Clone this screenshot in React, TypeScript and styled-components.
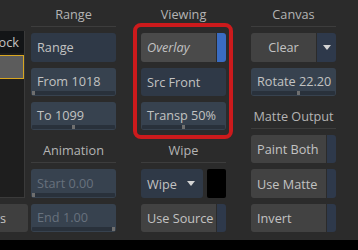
import React from "react";
import styled, { createGlobalStyle } from "styled-components";

const Global = createGlobalStyle`
  html, body { margin: 0; padding: 0; background: #2b2b2b; }
  body { font-family: "Open Sans", "Noto Sans", sans-serif; font-size: 12.7px; }
  * { box-sizing: border-box; }
`;

const Page = styled.div`
  width: 358px;
  height: 250px;
  display: flex;
  flex-direction: column;
  overflow: hidden;
  background: #2b2b2b;
`;

const Main = styled.div`
  height: 240px;
  display: flex;
  align-items: flex-start;
`;

const BottomBar = styled.div`
  height: 10px;
  background: #000;
`;

const LeftPanel = styled.div`
  width: 28px;
  flex-shrink: 0;
  display: flex;
  flex-direction: column;
  gap: 6px;
  padding-top: 31px;
`;

const List = styled.div`
  width: 25px;
  height: 167px;
  background: #1e1e1e;
  border-right: 1px solid #3a3a3a;
  border-bottom: 1px solid #3a3a3a;
  overflow: hidden;
  display: flex;
  flex-direction: column;
  gap: 2px;
`;

const ListHeader = styled.div`
  height: 22px;
  background: #131517;
  color: #c4c4c4;
  display: flex;
  align-items: center;
  justify-content: flex-end;
  padding-right: 5px;
  white-space: nowrap;
`;

const ListRow = styled.div<{ $selected?: boolean }>`
  height: 24px;
  margin-left: -4px;
  background: ${(p) => (p.$selected ? "#5c5c5c" : "transparent")};
  border: 1px solid ${(p) => (p.$selected ? "#d9a620" : "transparent")};
`;

const SideButton = styled.div`
  height: 28px;
  width: 28px;
  background: #3f3f3f;
  border-radius: 0 3px 3px 0;
  color: #c4c4c4;
  display: flex;
  align-items: center;
  justify-content: flex-end;
  padding-right: 22px;
  white-space: nowrap;
  overflow: hidden;
`;

const Column = styled.div<{ $offset: number }>`
  width: 85px;
  flex-shrink: 0;
  margin-left: ${(p) => p.$offset}px;
  display: flex;
  flex-direction: column;
  gap: 6px;
`;

const Group = styled.div<{ $highlight?: boolean }>`
  position: relative;
  display: flex;
  flex-direction: column;
  gap: 6px;
  ${(p) =>
    p.$highlight &&
    `
    &::after {
      content: "";
      position: absolute;
      top: -10px;
      left: -8px;
      right: -7px;
      bottom: -9px;
      border: 4px solid #cc1a1c;
      border-radius: 8px;
      pointer-events: none;
    }
  `}
`;

const Title = styled.div`
  height: 27.3px;
  padding-top: 2px;
  display: flex;
  align-items: center;
  justify-content: center;
  color: #b4b4b4;
  border-bottom: 1px solid #3d3d3d;
  white-space: nowrap;
`;

const Button = styled.div<{ $center?: boolean }>`
  height: 28.3px;
  border-radius: 3px;
  background: #2f3947;
  color: #c2c2c2;
  display: flex;
  align-items: center;
  justify-content: ${(p) => (p.$center ? "center" : "flex-start")};
  padding-left: ${(p) => (p.$center ? 0 : 6)}px;
  white-space: nowrap;
  overflow: hidden;
`;

const SliderBox = styled.div<{ $disabled?: boolean }>`
  position: relative;
  height: 28.3px;
  border-radius: 3px;
  background: #37424f;
  color: ${(p) => (p.$disabled ? "#67717d" : "#c2c2c2")};
  display: flex;
  align-items: center;
  padding-left: 6px;
  padding-bottom: 2px;
  white-space: nowrap;
  overflow: hidden;
`;

const Track = styled.div`
  position: absolute;
  left: 1px;
  right: 1px;
  bottom: 1px;
  height: 4px;
  background: #29313b;
  border-radius: 1px;
`;

const Handle = styled.div`
  position: absolute;
  top: 0;
  width: 3px;
  height: 4px;
  margin-left: -1.5px;
  background: #6f6f6f;
`;

const Split = styled.div`
  height: 28.3px;
  display: flex;
  gap: 1px;
  border-radius: 3px;
  overflow: hidden;
`;

const SplitMain = styled.div<{ $light?: boolean; $center?: boolean; $italic?: boolean }>`
  flex: 1;
  background: ${(p) => (p.$light ? "#4a4a4a" : "#424242")};
  color: #c2c2c2;
  display: flex;
  align-items: center;
  justify-content: ${(p) => (p.$center ? "center" : "flex-start")};
  padding-left: ${(p) => (p.$center ? 0 : 6)}px;
  font-style: ${(p) => (p.$italic ? "italic" : "normal")};
  white-space: nowrap;
`;

const Indicator = styled.div<{ $on?: boolean; $width: number }>`
  width: ${(p) => p.$width}px;
  background: ${(p) => (p.$on ? "#3a6cc2" : "#2e394b")};
  display: flex;
  align-items: center;
  justify-content: center;
`;

const Triangle = styled.div`
  width: 0;
  height: 0;
  border-left: 4.5px solid transparent;
  border-right: 4.5px solid transparent;
  border-top: 5px solid #d4d4d4;
`;

const Row = styled.div`
  height: 28.3px;
  display: flex;
  gap: 4px;
`;

const Dropdown = styled.div`
  flex: 1;
  border-radius: 3px;
  background: #2f3947;
  color: #c2c2c2;
  display: flex;
  align-items: center;
  justify-content: space-between;
  padding: 0 8px 0 6px;
`;

const Swatch = styled.div`
  width: 19px;
  border-radius: 2px;
  background: #000;
`;

function Slider({ label, value, disabled }: { label: string; value: number; disabled?: boolean }) {
  return (
    <SliderBox $disabled={disabled}>
      {label}
      <Track>
        <Handle style={{ left: `${Math.min(Math.max(value, 0.02), 0.98) * 100}%` }} />
      </Track>
    </SliderBox>
  );
}

function Toggle({ label, on, italic }: { label: string; on?: boolean; italic?: boolean }) {
  return (
    <Split>
      <SplitMain $light={on} $italic={italic}>
        {label}
      </SplitMain>
      <Indicator $on={on} $width={9} />
    </Split>
  );
}

export default function App() {
  return (
    <Page>
      <Global />
      <Main>
        <LeftPanel>
          <List>
            <ListHeader>Lock</ListHeader>
            <ListRow $selected />
          </List>
          <SideButton>Layers</SideButton>
        </LeftPanel>

        <Column $offset={3}>
          <Title>Range</Title>
          <Button>Range</Button>
          <Slider label="From 1018" value={0.02} />
          <Slider label="To 1099" value={0.5} />
          <Title>Animation</Title>
          <Slider label="Start 0.00" value={0} disabled />
          <Slider label="End 1.00" value={1} disabled />
        </Column>

        <Column $offset={25}>
          <Title>Viewing</Title>
          <Group $highlight>
            <Toggle label="Overlay" on italic />
            <Button>Src Front</Button>
            <Slider label="Transp 50%" value={0.5} />
          </Group>
          <Title>Wipe</Title>
          <Row>
            <Dropdown>
              Wipe
              <Triangle />
            </Dropdown>
            <Swatch />
          </Row>
          <Toggle label="Use Source" />
        </Column>

        <Column $offset={25}>
          <Title>Canvas</Title>
          <Split>
            <SplitMain $center>Clear</SplitMain>
            <Indicator $width={19}>
              <Triangle />
            </Indicator>
          </Split>
          <Slider label="Rotate 22.20" value={0.556} />
          <Title>Matte Output</Title>
          <Toggle label="Paint Both" />
          <Toggle label="Use Matte" />
          <Toggle label="Invert" />
        </Column>
      </Main>
      <BottomBar />
    </Page>
  );
}
